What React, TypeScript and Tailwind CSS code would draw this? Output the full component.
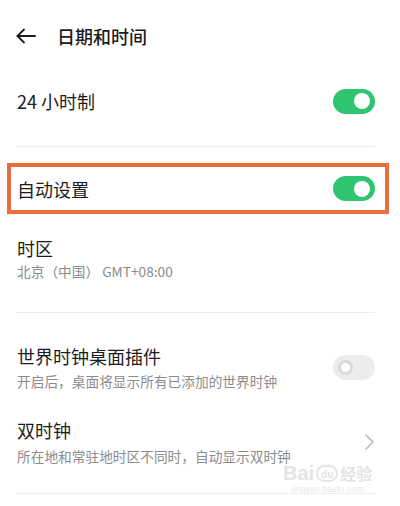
import React from "react";

const font = { fontFamily: '"Noto Sans CJK SC", "Noto Sans", sans-serif' };

function ToggleOn() {
  return (
    <div className="w-[42px] h-[25px] rounded-full bg-[#2fc471] flex items-center justify-end pr-[5px] shrink-0">
      <div className="w-[16px] h-[16px] rounded-full bg-white" />
    </div>
  );
}

function ToggleOff() {
  return (
    <div className="w-[42px] h-[25px] rounded-full bg-[#ececec] flex items-center pl-[5px] shrink-0">
      <div className="w-[15px] h-[15px] rounded-full bg-white border-[3px] border-[#d9d9d9]" />
    </div>
  );
}

export default function App() {
  return (
    <div className="w-[400px] h-[506px] bg-white overflow-hidden relative text-[#1c1c1c]" style={font}>
      {/* Header */}
      <div className="h-[72px] flex items-center pl-[16px]">
        <svg width="20" height="16" viewBox="0 0 20 16" fill="none" stroke="#1c1c1c" strokeWidth="1.8" strokeLinecap="round" strokeLinejoin="round">
          <path d="M19 8H1.5" />
          <path d="M8 1.5L1.5 8L8 14.5" />
        </svg>
        <span className="ml-[21px] text-[18px] leading-[24px] font-medium">日期和时间</span>
      </div>

      {/* 24 hour */}
      <div className="h-[58px] flex items-center justify-between pl-[17px] pr-[25px]">
        <span className="text-[18px] leading-[24px]">24 小时制</span>
        <ToggleOn />
      </div>
      <div className="mt-[16px] ml-[16px] mr-[25px] h-px bg-[#ededed]" />

      {/* Auto setting highlighted */}
      <div className="mt-[16px] ml-[7px] mr-[11px] h-[51px] border-4 border-[#ec6c3c] flex items-center justify-between pl-[6px] pr-[10px]">
        <span className="text-[18px] leading-[24px]">自动设置</span>
        <ToggleOn />
      </div>

      {/* Time zone */}
      <div className="mt-[22px] pl-[17px] pr-[25px]">
        <div className="text-[18px] leading-[24px]">时区</div>
        <div className="mt-[2px] text-[13.7px] leading-[18px] text-[#8c8c8c]">北京（中国） GMT+08:00</div>
      </div>
      <div className="mt-[32px] ml-[16px] mr-[25px] h-px bg-[#ededed]" />

      {/* World clock widget */}
      <div className="mt-[31px] pl-[17px] pr-[25px] flex items-center justify-between">
        <div>
          <div className="text-[18px] leading-[24px]">世界时钟桌面插件</div>
          <div className="mt-[4px] text-[13.7px] leading-[18px] text-[#8c8c8c]">开启后，桌面将显示所有已添加的世界时钟</div>
        </div>
        <ToggleOff />
      </div>

      {/* Dual clock */}
      <div className="mt-[28px] pl-[17px] pr-[25px] flex items-center justify-between">
        <div>
          <div className="text-[18px] leading-[24px]">双时钟</div>
          <div className="mt-[5px] text-[13.7px] leading-[18px] text-[#8c8c8c]">所在地和常驻地时区不同时，自动显示双时钟</div>
        </div>
        <svg width="9" height="16" viewBox="0 0 9 16" fill="none" stroke="#b8b8b8" strokeWidth="1.5" strokeLinecap="round" strokeLinejoin="round" className="mr-[1px]">
          <path d="M1 1L8 8L1 15" />
        </svg>
      </div>
      <div className="mt-[28px] ml-[16px] mr-[25px] h-px bg-[#ededed]" />

      {/* Watermark */}
      <div className="absolute left-[283px] top-[464px] flex flex-col items-center pointer-events-none">
        <div className="flex items-end gap-[2px] text-[#e4e4e4]">
          <span className="text-[20px] leading-[18px] font-bold" style={{ fontFamily: '"Liberation Sans", sans-serif' }}>Bai</span>
          <span className="w-[22px] h-[17px] rounded-full border-2 border-[#e4e4e4] text-[10px] leading-[13px] font-bold text-center">du</span>
          <span className="text-[16px] leading-[18px] font-bold">经验</span>
        </div>
        <div className="mt-[2px] text-[9px] leading-[11px] text-[#e8e8e8]" style={{ fontFamily: '"Liberation Sans", sans-serif' }}>jingyan.baidu.com</div>
      </div>
    </div>
  );
}
